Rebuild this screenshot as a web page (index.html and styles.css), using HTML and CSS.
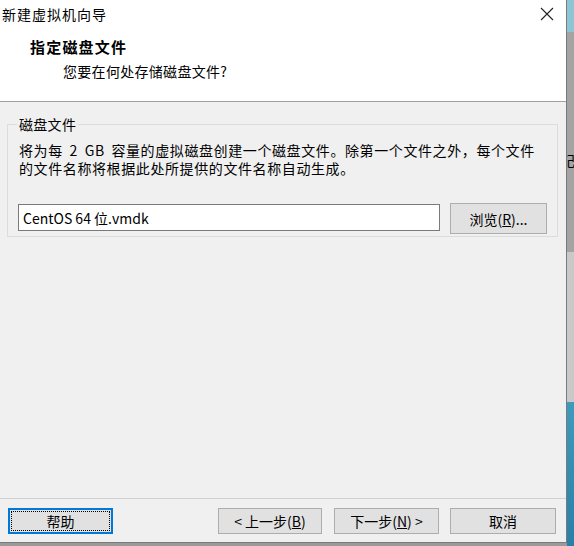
FILE: index.html
```html
<!DOCTYPE html>
<html lang="zh-CN">
<head>
<meta charset="UTF-8">
<meta name="viewport" content="width=device-width, initial-scale=1.0">
<title>新建虚拟机向导</title>
<link rel="stylesheet" href="styles.css">
</head>
<body>
    <div class="wizard">
        <div class="titlebar">
            <span class="title">新建虚拟机向导</span>
            <button class="close" title="关闭">
                <svg width="14" height="14" viewBox="0 0 14 14">
                    <path d="M1 1 L13 13 M13 1 L1 13" stroke="#222" stroke-width="1.1" fill="none"/>
                </svg>
            </button>
        </div>
        <div class="header">
            <div class="heading">指定磁盘文件</div>
            <div class="subheading">您要在何处存储磁盘文件?</div>
        </div>
        <div class="content">
            <fieldset class="group">
                <legend>磁盘文件</legend>
                <p class="desc">将为每 2 GB 容量的虚拟磁盘创建一个磁盘文件。除第一个文件之外，每个文件<br>的文件名称将根据此处所提供的文件名称自动生成。</p>
                <div class="file-row">
                    <input type="text" id="diskFile" value="CentOS 64 位.vmdk">
                    <button class="btn browse">浏览(<u>R</u>)...</button>
                </div>
            </fieldset>
        </div>
        <div class="footer">
            <button class="btn default">帮助</button>
            <div class="spacer"></div>
            <button class="btn back">&lt; 上一步(<u>B</u>)</button>
            <button class="btn next">下一步(<u>N</u>) &gt;</button>
            <button class="btn cancel">取消</button>
        </div>
    </div>
    <div class="desktop">
        <div class="d-top"></div>
        <div class="d-mid"><span>記</span></div>
        <div class="d-low"></div>
        <div class="d-blue"></div>
    </div>
</body>
</html>
```

FILE: styles.css
```css
body {
    margin: 0;
    width: 574px;
    height: 546px;
    display: flex;
    overflow: hidden;
    font-family: "Noto Sans CJK SC", "Microsoft YaHei", sans-serif;
    font-size: 14px;
    color: #000;
    background: #9a9a9a;
}
.wizard {
    width: 566px;
    height: 542px;
    display: flex;
    flex-direction: column;
    background: #f0f0f0;
    border-right: 1px solid #7a7a7a;
    border-bottom: 1px solid #7a7a7a;
}
.titlebar {
    height: 31px;
    display: flex;
    align-items: center;
    justify-content: space-between;
    background: #fff;
}
.title {
    padding-left: 2px;
    font-size: 14px;
    letter-spacing: 1px;
    margin-top: -3px;
}
.close {
    width: 46px;
    height: 31px;
    border: none;
    background: transparent;
    display: flex;
    align-items: center;
    justify-content: center;
    margin-right: -4px;
    padding: 0 0 4px 0;
}
.header {
    height: 70px;
    background: #fff;
    border-bottom: 1px solid #a0a0a0;
}
.heading {
    font-weight: bold;
    font-size: 15px;
    letter-spacing: 1.2px;
    padding-left: 30px;
    margin-top: 7px;
    line-height: 18px;
}
.subheading {
    padding-left: 63px;
    margin-top: 6px;
    line-height: 18px;
    letter-spacing: 0.3px;
}
.content {
    flex: 1;
}
.group {
    margin: 13px 10px 0 7px;
    padding: 5px 10px 2px 10px;
    border: 1px solid #dcdcdc;
    border-radius: 0;
}
.group legend {
    padding: 0 2px;
    margin-left: -1px;
    line-height: 18px;
    letter-spacing: 0.3px;
}
.desc {
    margin: 3px 0 0 1px;
    line-height: 18px;
    letter-spacing: 0.6px;
    word-spacing: 3px;
    white-space: nowrap;
}
.file-row {
    display: flex;
    align-items: flex-start;
    margin-top: 26px;
}
.file-row input {
    width: 422px;
    height: 27px;
    box-sizing: border-box;
    margin-top: 1px;
    border: 1px solid #7a7a7a;
    padding: 0 4px;
    font-family: "Noto Sans CJK SC", sans-serif;
    font-size: 14px;
    background: #fff;
    outline: none;
}
.btn {
    height: 26px;
    width: 106px;
    border: 1px solid #adadad;
    background: #e1e1e1;
    font-family: "Noto Sans CJK SC", sans-serif;
    font-size: 14px;
    color: #000;
    padding: 0;
}
.browse {
    margin-left: 10px;
    width: 97px;
    height: 31px;
}
.footer {
    height: 44px;
    border-top: 1px solid #d0d0d0;
    display: flex;
    align-items: flex-start;
    padding: 9px 10px 0 8px;
    box-sizing: border-box;
}
.spacer {
    flex: 1;
}
.btn.default {
    width: 105px;
    border: 2px solid #0078d7;
    outline: 1px dotted #000;
    outline-offset: -4px;
}
.btn.back {
    width: 104px;
}
.btn.next {
    width: 105px;
    margin-left: 12px;
}
.btn.cancel {
    margin-left: 11px;
}
.desktop {
    flex: 1;
    display: flex;
    flex-direction: column;
}
.d-top {
    height: 32px;
    background: #8cc6d4;
}
.d-mid {
    height: 220px;
    background: #a4a4a4;
    font-size: 14px;
    padding-top: 118px;
    box-sizing: border-box;
    overflow: hidden;
}
.d-mid span {
    margin-left: -6px;
}
.d-low {
    height: 150px;
    background: #c9c9c9;
}
.d-blue {
    flex: 1;
    background: linear-gradient(#3f9bbd, #2a7fa6);
}
```
